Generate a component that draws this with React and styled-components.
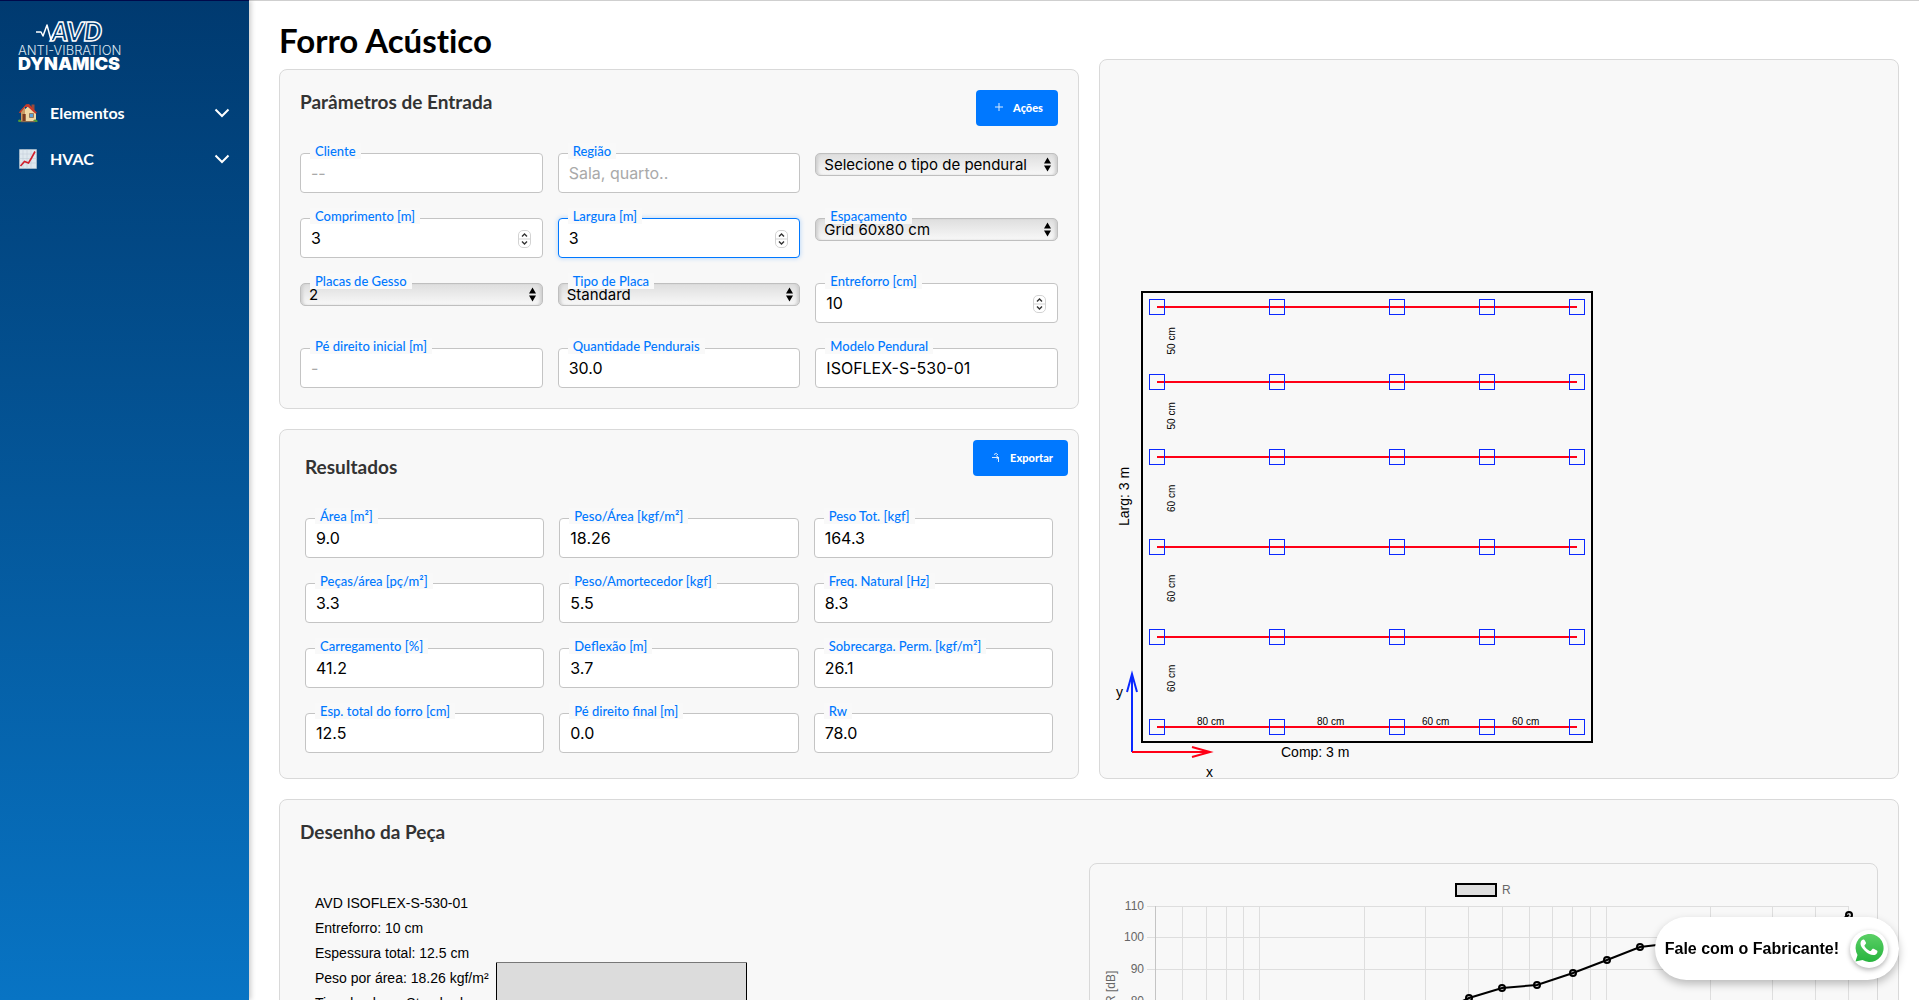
import React from "react";
import styled, { createGlobalStyle } from "styled-components";

const GlobalStyle = createGlobalStyle`
  * { box-sizing: border-box; }
  body { margin: 0; background: #fff; color: #000; font-family: Lato, sans-serif; }
`;

const Shell = styled.div`
  display: flex;
  height: 100vh;
  overflow: hidden;
`;

const Sidebar = styled.nav`
  flex: 0 0 249px;
  padding: 18px 16px;
  border-top: 1px solid #00094a;
  background: linear-gradient(180deg, #003a70 0%, #0874c4 100%);
  box-shadow: 2px 0 5px rgba(0, 0, 0, 0.2);
  z-index: 1;
`;

const LogoLink = styled.a`
  display: block;
  height: 54px;
  margin-bottom: 17px;
`;

const LogoDrawing = styled.svg`
  display: block;
  overflow: visible;
`;

const NavList = styled.ul`
  display: flex;
  flex-direction: column;
  margin: 0;
  padding: 0;
  list-style: none;
`;

const NavButton = styled.button`
  display: flex;
  align-items: center;
  gap: 12px;
  width: 100%;
  height: 46px;
  padding: 0 3px 0 2px;
  border: 0;
  background: none;
  color: #fff;
  font: 700 16px/20px Lato, sans-serif;
  text-align: left;
`;

const NavText = styled.span`
  flex: 1;
`;

const Main = styled.main`
  flex: 1;
  min-width: 0;
  padding: 20px 20px 20px 30px;
  border-top: 1px solid #cfcfcf;
  overflow-y: auto;
  scrollbar-width: none;
`;

const Title = styled.h1`
  margin: 0;
  font-size: 33px;
  line-height: 38px;
  font-weight: 700;
  font-variant-ligatures: none;
`;

const Columns = styled.div`
  display: grid;
  grid-template-columns: 1fr 1fr;
  gap: 20px;
  margin-bottom: 20px;
`;

const Stack = styled.div`
  display: flex;
  flex-direction: column;
  gap: 20px;
  padding-top: 10px;
`;

const Panel = styled.section`
  padding: ${(p) => p.$pad ?? 20}px;
  border: 1px solid #d9d9d9;
  border-radius: 8px;
  background: #f8f8f8;
`;

const PlanPanel = styled(Panel)`
  display: flex;
  align-items: flex-end;
  overflow: hidden;
`;

const PanelHeader = styled.header`
  display: flex;
  justify-content: space-between;
  align-items: flex-start;
  margin-bottom: ${(p) => p.$space}px;
`;

const Heading = styled.h2`
  margin: 0;
  padding: ${(p) => (p.$inset ? "15px 0 0 15px" : "0")};
  color: #333;
  font-size: 19px;
  line-height: 23px;
  font-weight: 700;
`;

const ActionButton = styled.button`
  display: flex;
  align-items: center;
  gap: 9px;
  height: 36px;
  padding: 0 15px 0 18px;
  border: 0;
  border-radius: 4px;
  background: #0078ff;
  color: #fff;
  font: 900 11px/16px Lato, sans-serif;
`;

const FieldGrid = styled.div`
  display: grid;
  grid-template-columns: repeat(3, 1fr);
  gap: 25px 15px;
  padding: ${(p) => (p.$inset ? "0 15px 15px" : "0")};
`;

const Field = styled.div`
  position: relative;
  height: 40px;
`;

const Label = styled.label`
  position: absolute;
  top: -10px;
  left: 10px;
  padding: 0 5px;
  background: #f9f9f9;
  color: #0078ff;
  font-size: 13px;
  line-height: 16px;
  font-weight: 500;
`;

const Input = styled.input`
  display: block;
  width: 100%;
  height: 40px;
  padding: 0 10px;
  border: 1px solid ${(p) => (p.$active ? "#0078ff" : "#c4c4c4")};
  border-radius: 4px;
  box-shadow: ${(p) => (p.$active ? "0 0 5px rgba(0, 123, 255, 0.3)" : "none")};
  background: #fff;
  color: #000;
  font: 400 16px/20px Inter, sans-serif;
  outline: 0;
  appearance: textfield;
  &::placeholder { color: #a9a9a9; }
  &::-webkit-inner-spin-button { appearance: none; margin: 0; }
`;

const Select = styled.select`
  display: block;
  width: 100%;
  height: 23px;
  padding: 0 20px 0 8px;
  border: 1px solid #bfbfbf;
  border-radius: 5px;
  background: linear-gradient(180deg, #dedede 0%, #f8f8f8 100%);
  box-shadow: inset 3px 0 3px -1px #cfcfcf, inset -3px 0 3px -1px #cfcfcf;
  color: #000;
  font: 400 15px/20px Inter, sans-serif;
  font-variant-ligatures: no-contextual;
  appearance: none;
`;

const SelectMark = styled.svg`
  position: absolute;
  top: 4px;
  right: 6px;
  pointer-events: none;
`;

const StepMark = styled.svg`
  position: absolute;
  top: 12px;
  right: 12px;
  pointer-events: none;
`;

const Halves = styled.div`
  display: grid;
  grid-template-columns: 1fr 1fr;
`;

const ChartCard = styled.div`
  border: 1px solid #d9d9d9;
  border-radius: 8px;
`;

const Drawing = styled.svg`
  display: block;
  font-family: "Liberation Sans", Arial, sans-serif;
`;

const ContactLink = styled.a`
  position: fixed;
  right: 20px;
  bottom: 20px;
  display: flex;
  align-items: center;
  gap: 11px;
  height: 63px;
  padding: 0 11px 0 10px;
  border-radius: 32px;
  background: #fff;
  box-shadow: 0 4px 8px rgba(0, 0, 0, 0.25);
  color: #000;
  font: 700 16px/20px "Liberation Sans", Arial, sans-serif;
  text-decoration: none;
  z-index: 2;
`;

const ContactIcon = styled.span`
  display: grid;
  place-items: center;
  width: 38px;
  height: 38px;
  border-radius: 50%;
  background: #fff;
  box-shadow: 0 2px 5px rgba(0, 0, 0, 0.3);
`;

function Logo() {
  return (
    <LogoDrawing width="112" height="54" viewBox="0 0 112 54" aria-label="AVD Anti-Vibration Dynamics">
      <path d="M20 13h5l2 4 4-11 4 15 3-7" fill="none" stroke="#fff" strokeWidth="1.5" strokeLinejoin="round" />
      <text x="35" y="22" fill="none" stroke="#fff" strokeWidth="1.4" fontFamily="Lato" fontWeight="900" fontStyle="italic" fontSize="26">AVD</text>
      <text x="2" y="36" fill="#dbe6f0" fontFamily="Inter" fontWeight="300" fontSize="13">ANTI-VIBRATION</text>
      <text x="2" y="51" fill="#fff" fontFamily="Inter" fontWeight="900" fontSize="18">DYNAMICS</text>
    </LogoDrawing>
  );
}

function HouseIcon() {
  return (
    <svg width="20" height="20" viewBox="0 0 20 20" aria-hidden="true">
      <path d="M13.5 1.5h3v6h-3z" fill="#9b4a3a" />
      <path d="M4 9l7-6.5 7 7V18H4z" fill="#f1d9a6" />
      <path d="M2 8.500 7 3v15H3V9z" fill="#c99a63" />
      <path d="M.8 9.600 8 1.200 11 1l8 8.800-1.600 1L10 4 7.200 4 2.200 10.300z" fill="#c43a2b" />
      <path d="M4.500 11h3.200v7H4.500z" fill="#7a3b22" />
      <path d="M11.500 10.500h4v4h-4z" fill="#5ba3d9" stroke="#8b5a34" strokeWidth=".7" />
      <path d="M0 17.500q1.500-2 3 0l1 1.500H.5zM15 18q2-2.600 4.500-.5v1.500H15z" fill="#4f9a3a" />
      <path d="M3 18h14v1.200H3z" fill="#8a6a50" />
    </svg>
  );
}

function TrendIcon() {
  return (
    <svg width="20" height="20" viewBox="0 0 20 20" aria-hidden="true">
      <path d="M1.500.5h17v19h-17z" fill="#dfe8ee" stroke="#b9c8d2" strokeWidth=".6" />
      <path d="M5 .5v19M9 .5v19M13 .5v19M1.500 5h17M1.500 9.500h17M1.500 14h17" stroke="#bccbd5" strokeWidth=".5" />
      <path d="M2.500 17l4-4.500 4 1.500 3-5 3.500-6.500" fill="none" stroke="#d01f2c" strokeWidth="1.600" />
    </svg>
  );
}

function Chevron() {
  return (
    <svg width="16" height="10" viewBox="0 0 16 10" aria-hidden="true">
      <path d="M1.500 1.500 8 8l6.500-6.500" fill="none" stroke="#fff" strokeWidth="2" />
    </svg>
  );
}

function PlusIcon() {
  return (
    <svg width="10" height="10" viewBox="0 0 10 10" aria-hidden="true">
      <path d="M5 0v8M1 4h8" stroke="#fff" strokeWidth="1" opacity=".85" />
    </svg>
  );
}

function ExportIcon() {
  return (
    <svg width="10" height="12" viewBox="0 0 10 12" aria-hidden="true">
      <path d="M1 5.500h6.500M3 2.500q2.500-2.500 4 .5M5 3.500l2.500 2-2 1.500M7.500 5.500V10" fill="none" stroke="#fff" strokeWidth="1" opacity=".85" />
    </svg>
  );
}

function TextField({ id, label, active, type = "text", ...rest }) {
  return (
    <Field>
      <Input id={id} type={type} $active={active} {...rest} />
      <Label htmlFor={id}>{label}</Label>
      {type === "number" && (
        <StepMark width="13" height="18" viewBox="0 0 13 18" aria-hidden="true">
          <rect x=".5" y=".5" width="12" height="17" rx="4.500" fill="#fff" stroke="#d3d3d3" />
          <path d="M1 9h11" stroke="#d3d3d3" />
          <path d="M4 6.500 6.500 4 9 6.500M4 11.500 6.500 14 9 11.500" fill="none" stroke="#333" strokeWidth="1.400" />
        </StepMark>
      )}
    </Field>
  );
}

function SelectField({ id, label, value }) {
  return (
    <Field>
      <Select id={id} defaultValue={value} aria-label={label ? undefined : value}>
        <option>{value}</option>
      </Select>
      {label && <Label htmlFor={id}>{label}</Label>}
      <SelectMark width="9" height="15" viewBox="0 0 9 15" aria-hidden="true">
        <path d="M4.500.5 8 6.500H1zM4.500 14.500 8 8.500H1z" />
      </SelectMark>
    </Field>
  );
}

const results = [
  ["area", "Área [m²]", "9.0"],
  ["peso-area", "Peso/Área [kgf/m²]", "18.26"],
  ["peso-total", "Peso Tot. [kgf]", "164.3"],
  ["pecas-area", "Peças/área [pç/m²]", "3.3"],
  ["peso-amortecedor", "Peso/Amortecedor [kgf]", "5.5"],
  ["freq-natural", "Freq. Natural [Hz]", "8.3"],
  ["carregamento", "Carregamento [%]", "41.2"],
  ["deflexao", "Deflexão [m]", "3.7"],
  ["sobrecarga", "Sobrecarga. Perm. [kgf/m²]", "26.1"],
  ["espessura", "Esp. total do forro [cm]", "12.5"],
  ["pe-direito-final", "Pé direito final [m]", "0.0"],
  ["rw", "Rw", "78.0"],
];

const hangerX = [57, 177, 297, 387, 477];
const beamY = [29, 104, 179, 269, 359, 449];

function CeilingPlan() {
  return (
    <Drawing width="500" height="500" viewBox="0 0 500 500" role="img" aria-label="Planta do forro">
      <rect x="42" y="14" width="450" height="450" fill="none" stroke="#000" strokeWidth="2" />
      {beamY.map((y) => (
        <g key={y}>
          <path d={`M57 ${y}H477`} stroke="#ff0016" strokeWidth="2" />
          {hangerX.map((x) => (
            <rect key={x} x={x - 7.5} y={y - 7.5} width="15" height="15" fill="none" stroke="#0a28ff" />
          ))}
        </g>
      ))}
      <g fontSize="10">
        {beamY.slice(1).map((y, i) => {
          const gap = y - beamY[i];
          const mid = beamY[i] + gap / 2;
          return (
            <text key={y} transform={`translate(75 ${mid + 10}) rotate(-90)`}>
              {gap / 1.5} cm
            </text>
          );
        })}
        {hangerX.slice(1).map((x, i) => {
          const gap = x - hangerX[i];
          return (
            <text key={x} x={hangerX[i] + gap / 2 - 20} y="447">
              {gap / 1.5} cm
            </text>
          );
        })}
      </g>
      <g fontSize="14">
        <text x="181" y="479">Comp: 3 m</text>
        <text transform="translate(29 248) rotate(-90)">Larg: 3 m</text>
        <text x="16" y="419">y</text>
        <text x="106" y="499">x</text>
      </g>
      <path d="M32 474V396M27 414l5-18 5 18" fill="none" stroke="#0a28ff" strokeWidth="2" />
      <path d="M32 474h78M92 469l18 5-18 5" fill="none" stroke="#ff0016" strokeWidth="2" />
    </Drawing>
  );
}

const specLines = [
  "AVD ISOFLEX-S-530-01",
  "Entreforro: 10 cm",
  "Espessura total: 12.5 cm",
  "Peso por área: 18.26 kgf/m²",
  "Tipo de placa: Standard",
];

function PieceDrawing() {
  return (
    <Drawing width="500" height="400" viewBox="0 0 500 400" role="img" aria-label="Desenho da peça">
      <g fontSize="14">
        {specLines.map((line, i) => (
          <text key={line} x="15" y={45 + i * 25}>{line}</text>
        ))}
      </g>
      <rect x="196.500" y="99.500" width="250" height="280" fill="#dcdcdc" stroke="#000" />
      <path d="M196 99.500h251" stroke="#777" />
    </Drawing>
  );
}

const gridX = [93, 117, 137, 154, 170, 275, 336, 379, 413, 440, 463, 483, 501, 517, 621, 683, 726, 759];
const gridY = [42, 73, 105, 137, 169, 201];
const curve = [[345, 150], [379, 134], [412, 124], [447, 121], [483, 109], [517, 96], [550, 83], [584, 79], [621, 76], [655, 74], [690, 72], [726, 70], [759, 51]];

function LossChart() {
  return (
    <Drawing width="100%" viewBox="0 0 787 400" role="img" aria-label="R [dB] por frequência">
      <path d={gridX.map((x) => `M${x - 0.5} 42V360`).join("")} stroke="#dedede" />
      <path d={gridY.map((y) => `M57 ${y + 0.5}H759`).join("")} stroke="#dedede" />
      <path d="M65.500 42V360" stroke="#c4c4c4" />
      <rect x="366" y="20" width="40" height="12" fill="#dedede" stroke="#000" strokeWidth="2" />
      <g fontSize="12" fill="#666">
        <text x="412" y="30">R</text>
        <g textAnchor="end">
          {gridY.map((y, i) => (
            <text key={y} x="54" y={y + 4}>{110 - i * 10}</text>
          ))}
        </g>
        <text transform="translate(25 140) rotate(-90)">R [dB]</text>
      </g>
      <polyline points={curve.map((p) => p.join(",")).join(" ")} fill="none" stroke="#000" strokeWidth="2" />
      {curve.map(([x, y]) => (
        <circle key={x} cx={x} cy={y} r="3" fill="rgba(0,0,0,.1)" stroke="#000" strokeWidth="2" />
      ))}
    </Drawing>
  );
}

function WhatsAppIcon() {
  return (
    <svg width="30" height="30" viewBox="0 1 30 30" aria-hidden="true">
      <defs>
        <linearGradient id="bubble" x1="0" y1="0" x2="0" y2="1">
          <stop offset="0" stopColor="#5bd066" />
          <stop offset="1" stopColor="#27b43e" />
        </linearGradient>
      </defs>
      <path d="M1.500 28.500 3.500 22A14 14 0 1 1 8.500 27z" fill="url(#bubble)" />
      <path d="M10.800 7.500c-.5-1-1-1-1.600-.9-1.500.3-2.700 2-2.700 4 0 2.200 1.500 4.500 4.200 7.100 3 2.900 6 4.400 8.500 4.400 2.200 0 4-1.600 4.200-3.200.1-.9 0-1.200-.5-1.500l-3.200-1.600c-.6-.3-1-.2-1.400.3l-1.300 1.600c-.3.400-.7.400-1.200.2-2.200-1-4-2.600-5.200-4.700-.3-.5-.2-.8.200-1.200l1-1.200c.3-.4.300-.7.100-1.200z" fill="#fff" />
    </svg>
  );
}

export default function App() {
  return (
    <>
      <GlobalStyle />
      <Shell>
        <Sidebar>
          <LogoLink href="#inicio"><Logo /></LogoLink>
          <NavList>
            <li><NavButton type="button"><HouseIcon /><NavText>Elementos</NavText><Chevron /></NavButton></li>
            <li><NavButton type="button"><TrendIcon /><NavText>HVAC</NavText><Chevron /></NavButton></li>
          </NavList>
        </Sidebar>
        <Main>
          <Title>Forro Acústico</Title>
          <Columns>
            <Stack>
              <Panel>
                <PanelHeader $space={27}>
                  <Heading>Parâmetros de Entrada</Heading>
                  <ActionButton type="button"><PlusIcon />Ações</ActionButton>
                </PanelHeader>
                <FieldGrid>
                  <TextField id="cliente" label="Cliente" placeholder="--" />
                  <TextField id="regiao" label="Região" placeholder="Sala, quarto.." />
                  <SelectField id="pendural" value="Selecione o tipo de pendural" />
                  <TextField id="comprimento" label="Comprimento [m]" type="number" defaultValue="3" />
                  <TextField id="largura" label="Largura [m]" type="number" defaultValue="3" active />
                  <SelectField id="espacamento" label="Espaçamento" value="Grid 60x80 cm" />
                  <SelectField id="placas" label="Placas de Gesso" value="2" />
                  <SelectField id="tipo-placa" label="Tipo de Placa" value="Standard" />
                  <TextField id="entreforro" label="Entreforro [cm]" type="number" defaultValue="10" />
                  <TextField id="pe-direito" label="Pé direito inicial [m]" placeholder="-" />
                  <TextField id="quantidade" label="Quantidade Pendurais" defaultValue="30.0" />
                  <TextField id="modelo" label="Modelo Pendural" defaultValue="ISOFLEX-S-530-01" />
                </FieldGrid>
              </Panel>
              <Panel $pad={10}>
                <PanelHeader $space={40}>
                  <Heading $inset>Resultados</Heading>
                  <ActionButton type="button"><ExportIcon />Exportar</ActionButton>
                </PanelHeader>
                <FieldGrid $inset>
                  {results.map(([id, label, value]) => (
                    <TextField key={id} id={id} label={label} value={value} readOnly />
                  ))}
                </FieldGrid>
              </Panel>
            </Stack>
            <PlanPanel $pad={0}>
              <CeilingPlan />
            </PlanPanel>
          </Columns>
          <Panel>
            <PanelHeader $space={20}>
              <Heading>Desenho da Peça</Heading>
            </PanelHeader>
            <Halves>
              <PieceDrawing />
              <ChartCard><LossChart /></ChartCard>
            </Halves>
          </Panel>
        </Main>
      </Shell>
      <ContactLink href="#contato">
        Fale com o Fabricante!
        <ContactIcon><WhatsAppIcon /></ContactIcon>
      </ContactLink>
    </>
  );
}
